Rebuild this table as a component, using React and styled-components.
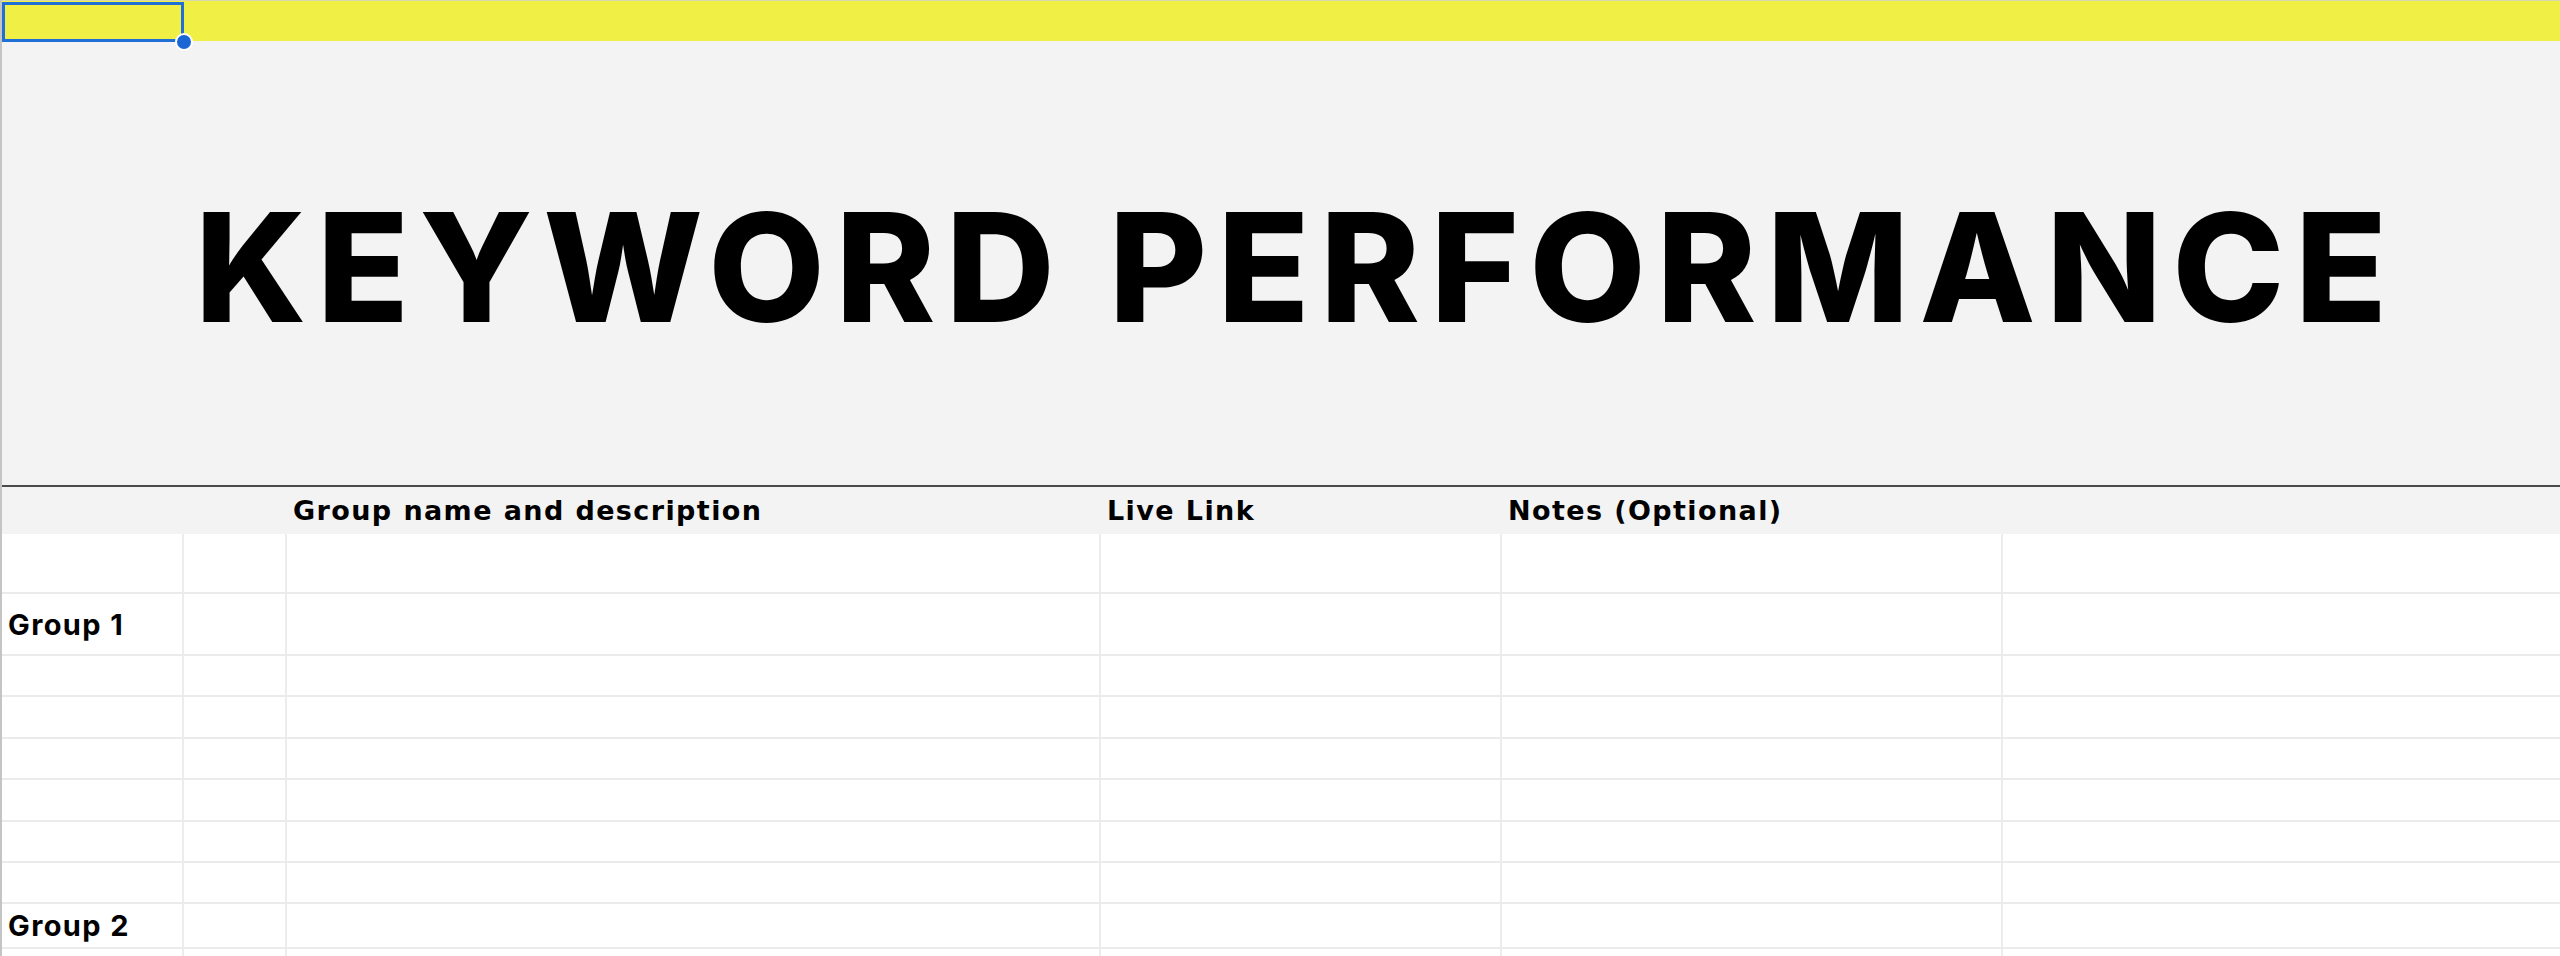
import React from "react";
import styled, { createGlobalStyle } from "styled-components";

const Global = createGlobalStyle`
  html, body { margin: 0; padding: 0; background: #ffffff; }
  body { font-family: Inter, "Noto Sans", sans-serif; overflow: hidden; }
`;

const COLS = "182px 103px 814px 401px 501px 1fr";

const Page = styled.div`
  width: 2560px;
  height: 956px;
  overflow: hidden;
  border-left: 2px solid #c4c4c4;
  box-sizing: border-box;
  position: relative;
`;

const TopBar = styled.div`
  height: 41px;
  background: #f0ef45;
  border-top: 1px solid #d8d8b0;
  box-sizing: border-box;
  position: relative;
`;

const Selection = styled.div`
  position: absolute;
  left: 0;
  top: 1px;
  width: 182px;
  height: 40px;
  border: 3px solid #1f6fd6;
  box-sizing: border-box;
`;

const Handle = styled.div`
  position: absolute;
  left: 173px;
  top: 32px;
  width: 18px;
  height: 18px;
  border-radius: 50%;
  background: #1a66d4;
  border: 2px solid #ffffff;
  box-sizing: border-box;
  z-index: 2;
`;

const TitleBlock = styled.div`
  height: 444px;
  background: #f3f3f3;
  border-bottom: 2px solid #4a4a4a;
  box-sizing: content-box;
  display: flex;
  align-items: center;
  padding-left: 193px;
`;

const Title = styled.h1`
  margin: 0;
  font-family: Inter, sans-serif;
  font-weight: 800;
  font-size: 151px;
  line-height: 1;
  letter-spacing: 10.4px;
  color: #000;
  padding-top: 8px;
  white-space: nowrap;
`;

const HeaderRow = styled.div`
  display: grid;
  grid-template-columns: ${COLS};
  height: 47px;
  background: #f3f3f3;
  align-items: center;
`;

const HeaderLabel = styled.div`
  font-family: "DejaVu Sans", Inter, sans-serif;
  font-weight: 700;
  font-size: 27px;
  letter-spacing: 1.4px;
  color: #000;
  padding-left: 6px;
  padding-top: 0px;
  white-space: nowrap;
`;

const Body = styled.div`
  display: grid;
  grid-template-columns: ${COLS};
`;

const Cell = styled.div`
  height: ${(p) => p.$h}px;
  border-right: 2px solid #ececec;
  border-bottom: 2px solid #ebebeb;
  box-sizing: border-box;
  display: flex;
  align-items: center;
  padding-left: 6px;
  font-family: Inter, sans-serif;
  font-weight: 700;
  font-size: 29px;
  letter-spacing: 1.4px;
  color: #000;
  white-space: nowrap;
  &:nth-child(6n) { border-right: none; }
`;

const rows = [
  { h: 60 },
  { h: 62, label: "Group 1" },
  { h: 41 },
  { h: 42 },
  { h: 41 },
  { h: 42 },
  { h: 41 },
  { h: 41 },
  { h: 45, label: "Group 2" },
  { h: 41 },
  { h: 41 },
];

export default function App() {
  return (
    <>
      <Global />
      <Page>
        <TopBar>
          <Selection />
          <Handle />
        </TopBar>
        <TitleBlock>
          <Title>KEYWORD PERFORMANCE</Title>
        </TitleBlock>
        <HeaderRow>
          <HeaderLabel />
          <HeaderLabel />
          <HeaderLabel>Group name and description</HeaderLabel>
          <HeaderLabel>Live Link</HeaderLabel>
          <HeaderLabel>Notes (Optional)</HeaderLabel>
          <HeaderLabel />
        </HeaderRow>
        <Body>
          {rows.map((r, i) =>
            [0, 1, 2, 3, 4, 5].map((c) => (
              <Cell key={`${i}-${c}`} $h={r.h}>
                {c === 0 && r.label ? r.label : null}
              </Cell>
            ))
          )}
        </Body>
      </Page>
    </>
  );
}
